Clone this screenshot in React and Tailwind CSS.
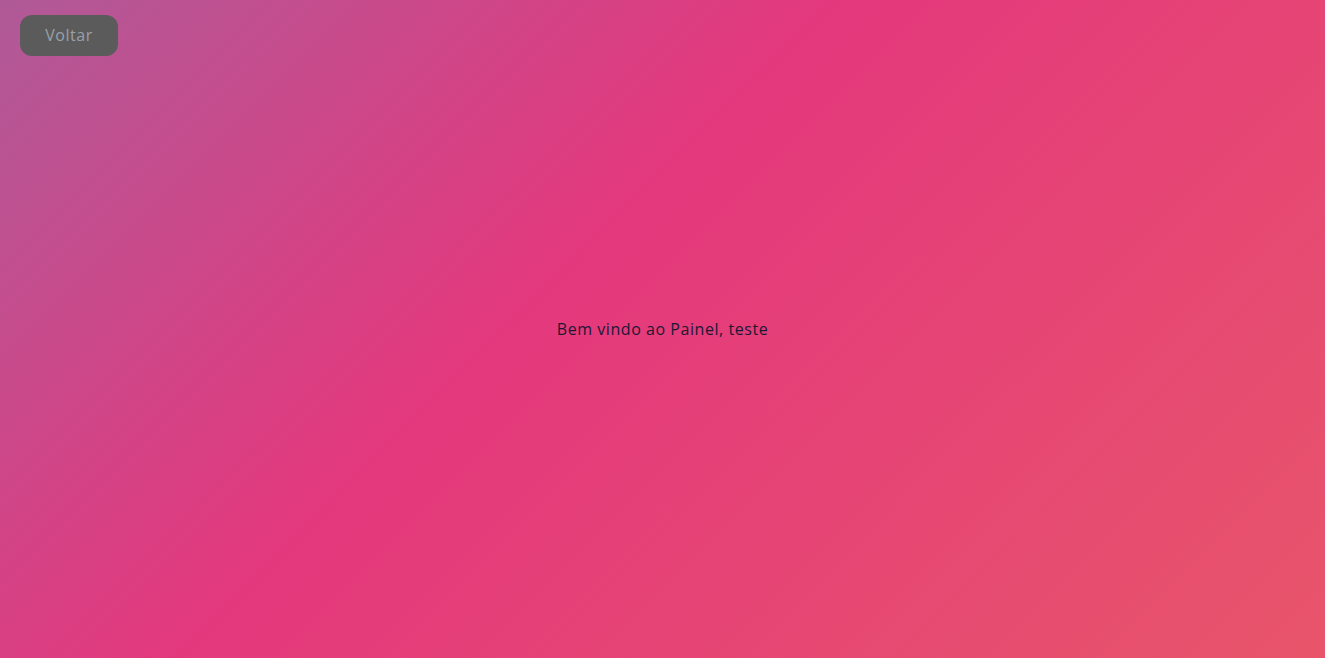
export default function App() {
  return (
    <div className="relative h-screen w-full bg-[linear-gradient(135deg,#b05a98_0%,#e4387d_42%,#e8556a_100%)] font-['Open_Sans',sans-serif] tracking-[0.55px]">
      {/* back button */}
      <button className="absolute left-5 top-[15px] h-[41px] w-[98px] rounded-xl bg-[#5b5b5b] pb-px text-[16px] text-[#9aa0aa]">
        Voltar
      </button>

      <div className="flex h-full items-center justify-center">
        <p className="text-[16px] text-[#1c1733]">Bem vindo ao Painel, teste</p>
      </div>
    </div>
  );
}
